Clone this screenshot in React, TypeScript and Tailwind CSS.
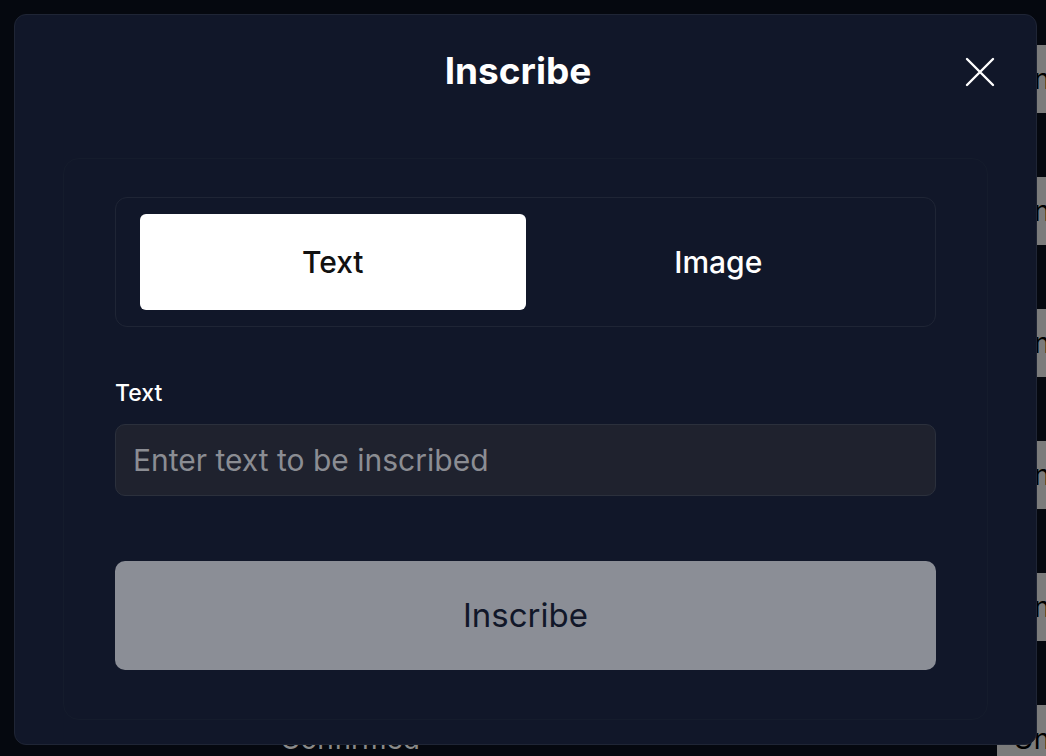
import { useState } from "react";

const rows = [0, 1, 2, 3, 4, 5];

function CloseIcon() {
  return (
    <svg width="30" height="30" viewBox="0 0 30 30" fill="none">
      <path d="M2 2L28 28M28 2L2 28" stroke="#ffffff" strokeWidth="2.4" strokeLinecap="round" />
    </svg>
  );
}

export default function App() {
  const [tab, setTab] = useState<"text" | "image">("text");
  const [value, setValue] = useState("");

  return (
    <div className="relative w-[1046px] h-[756px] overflow-hidden bg-[#05080f] font-['Inter','Liberation_Sans',sans-serif]">
      {/* page behind the overlay */}
      <div className="flex flex-col gap-[64px] pt-[45px]">
        {rows.map((r) => (
          <div key={r} className="flex h-[68px] items-center">
            <div className="w-[997px] shrink-0 pl-[280px] text-[28px] text-[#8a8a8a]">Confirmed</div>
            <div className="flex h-full w-[160px] shrink-0 items-center bg-[#7b7b7b] pl-[16px] text-[28px] text-black">
              Unconfirm
            </div>
          </div>
        ))}
      </div>

      {/* modal */}
      <div className="absolute left-[14px] top-[14px] flex w-[1023px] h-[731px] flex-col rounded-[12px] border border-[#1f2535] bg-[#111729] pb-[24px]">
        <div className="relative flex h-[112px] shrink-0 items-center justify-center">
          <h2 className="mr-[15px] text-[37px] font-bold text-white">Inscribe</h2>
          <button className="absolute right-[41px] top-[42px]">
            <CloseIcon />
          </button>
        </div>

        <div className="mx-12 mt-[31px] flex flex-1 flex-col rounded-[16px] border border-[#151c2c] px-[51px] pt-[38px]">
          <div className="grid grid-cols-2 rounded-xl border border-[#1f2535] px-6 py-4">
            <button
              onClick={() => setTab("text")}
              className={`h-[96px] rounded-md text-[30px] font-medium ${tab === "text" ? "bg-white text-[#111]" : "text-white"}`}
            >
              Text
            </button>
            <button
              onClick={() => setTab("image")}
              className={`h-[96px] rounded-md text-[30px] font-medium ${tab === "image" ? "bg-white text-[#111]" : "text-white"}`}
            >
              Image
            </button>
          </div>

          <label className="mt-[51px] block text-[23px] font-medium leading-[30px] text-white">Text</label>
          <input
            value={value}
            onChange={(e) => setValue(e.target.value)}
            placeholder="Enter text to be inscribed"
            className="mt-[16px] h-[72px] w-full rounded-[10px] border border-[#2b303c] bg-[#1f222e] px-[17px] text-[30px] text-white outline-none placeholder:text-[#8b8d93]"
          />

          <button className="mt-[65px] h-[109px] w-full rounded-[10px] bg-[#8b8e96] text-[33px] text-[#111729]">
            Inscribe
          </button>
        </div>
      </div>
    </div>
  );
}
